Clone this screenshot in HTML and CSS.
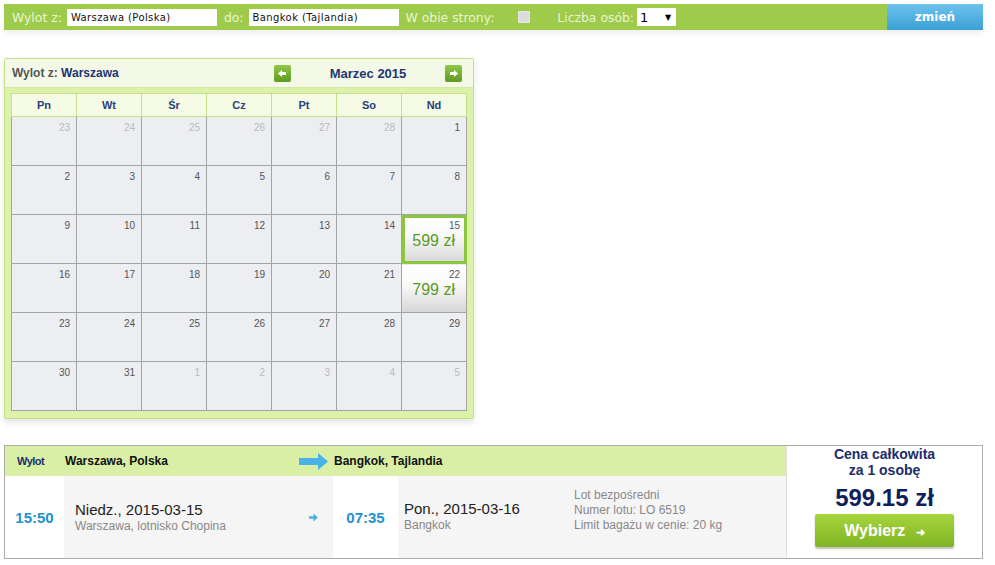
FILE: index.html
```html
<!DOCTYPE html>
<html lang="pl">
<head>
    <meta charset="UTF-8">
    <title>Wyszukiwarka lotów</title>
    <link rel="stylesheet" href="styles.css">
</head>
<body>
<form class="searchbar">
    <label class="sb-label">Wylot z:</label>
    <input type="text" class="sb-input" value="Warszawa (Polska)">
    <label class="sb-label sb-gap">do:</label>
    <input type="text" class="sb-input" value="Bangkok (Tajlandia)">
    <label class="sb-label sb-gap">W obie strony:</label>
    <span class="sb-check"></span>
    <label class="sb-label sb-persons">Liczba osób:</label>
    <span class="sb-select">1 <span class="sb-caret">&#9660;</span></span>
    <button type="button" class="sb-submit">zmień</button>
</form>

<div class="cal">
    <div class="cal-head">
        <div class="cal-from">Wylot z: <b>Warszawa</b></div>
        <span class="cal-nav">
            <svg width="17" height="17" viewBox="0 0 17 17"><path d="M4 8.5 L8 5 V7 H12 V10 H8 V12 Z" fill="#fff"/></svg>
        </span>
        <div class="cal-month">Marzec 2015</div>
        <span class="cal-nav">
            <svg width="17" height="17" viewBox="0 0 17 17"><path d="M13 8.5 L9 5 V7 H5 V10 H9 V12 Z" fill="#fff"/></svg>
        </span>
    </div>
    <table class="cal-grid">
        <thead>
        <tr>
            <th>Pn</th><th>Wt</th><th>Śr</th><th>Cz</th><th>Pt</th><th>So</th><th>Nd</th>
        </tr>
        </thead>
        <tbody>
        <tr>
            <td class="off"><span class="day">23</span></td>
            <td class="off"><span class="day">24</span></td>
            <td class="off"><span class="day">25</span></td>
            <td class="off"><span class="day">26</span></td>
            <td class="off"><span class="day">27</span></td>
            <td class="off"><span class="day">28</span></td>
            <td><span class="day">1</span></td>
        </tr>
        <tr>
            <td><span class="day">2</span></td>
            <td><span class="day">3</span></td>
            <td><span class="day">4</span></td>
            <td><span class="day">5</span></td>
            <td><span class="day">6</span></td>
            <td><span class="day">7</span></td>
            <td><span class="day">8</span></td>
        </tr>
        <tr>
            <td><span class="day">9</span></td>
            <td><span class="day">10</span></td>
            <td><span class="day">11</span></td>
            <td><span class="day">12</span></td>
            <td><span class="day">13</span></td>
            <td><span class="day">14</span></td>
            <td class="priced selected"><span class="day">15</span><span class="price">599 zł</span></td>
        </tr>
        <tr>
            <td><span class="day">16</span></td>
            <td><span class="day">17</span></td>
            <td><span class="day">18</span></td>
            <td><span class="day">19</span></td>
            <td><span class="day">20</span></td>
            <td><span class="day">21</span></td>
            <td class="priced"><span class="day">22</span><span class="price">799 zł</span></td>
        </tr>
        <tr>
            <td><span class="day">23</span></td>
            <td><span class="day">24</span></td>
            <td><span class="day">25</span></td>
            <td><span class="day">26</span></td>
            <td><span class="day">27</span></td>
            <td><span class="day">28</span></td>
            <td><span class="day">29</span></td>
        </tr>
        <tr>
            <td><span class="day">30</span></td>
            <td><span class="day">31</span></td>
            <td class="off"><span class="day">1</span></td>
            <td class="off"><span class="day">2</span></td>
            <td class="off"><span class="day">3</span></td>
            <td class="off"><span class="day">4</span></td>
            <td class="off"><span class="day">5</span></td>
        </tr>
        </tbody>
    </table>
</div>

<div class="flight">
    <div class="flight-main">
        <div class="flight-head">
            <span class="fh-label">Wylot</span>
            <span class="fh-city fh-from">Warszawa, Polska</span>
            <svg class="fh-arrow" width="29" height="17" viewBox="0 0 29 17"><path d="M0 5 H19 V0 L29 8.5 L19 17 V12 H0 Z" fill="#4bb2e8"/></svg>
            <span class="fh-city">Bangkok, Tajlandia</span>
        </div>
        <div class="flight-row">
            <div class="f-time">15:50</div>
            <div class="f-info f-dep">
                <div class="f-date">Niedz., 2015-03-15</div>
                <div class="f-place">Warszawa, lotnisko Chopina</div>
                <svg class="f-go" width="9" height="9" viewBox="0 0 9 9"><path d="M0 3.3 H4.5 V0.5 L8.8 4.5 L4.5 8.5 V5.7 H0 Z" fill="#47b0e2"/></svg>
            </div>
            <div class="f-time f-time2">07:35</div>
            <div class="f-info f-arr">
                <div class="f-dest">
                    <div class="f-date">Pon., 2015-03-16</div>
                    <div class="f-place">Bangkok</div>
                </div>
                <div class="f-details">
                    <div>Lot bezpośredni</div>
                    <div>Numer lotu: LO 6519</div>
                    <div>Limit bagażu w cenie: 20 kg</div>
                </div>
            </div>
        </div>
    </div>
    <div class="flight-price">
        <div class="fp-title">Cena całkowita<br>za 1 osobę</div>
        <div class="fp-sum">599.15 zł</div>
        <button type="button" class="fp-btn">Wybierz <span class="fp-btn-arrow">&#10140;</span></button>
    </div>
</div>
</body>
</html>
```

FILE: styles.css
```css
body {
    margin: 0;
    padding: 4px;
    background: #fff;
    font-family: "Liberation Sans", Arial, sans-serif;
}

/* top search bar */
.searchbar {
    display: flex;
    align-items: center;
    width: 979px;
    height: 26px;
    margin: 0;
    background: #9ecb4b;
    box-shadow: 0 4px 5px rgba(0, 0, 0, 0.06);
    font-family: "DejaVu Sans", Verdana, sans-serif;
}
.sb-label {
    color: #e9f5d4;
    font-size: 12.4px;
    margin-left: 8px;
    margin-right: 5px;
}
.sb-gap {
    margin-left: 7px;
}
.sb-persons {
    margin-left: 27px;
    margin-right: 3px;
}
.sb-input {
    width: 150px;
    height: 17px;
    padding: 0 4px;
    border: none;
    box-sizing: border-box;
    font-family: "DejaVu Sans", Verdana, sans-serif;
    font-size: 10px;
    letter-spacing: 0.4px;
    color: #111;
    background: #fff;
}
.sb-check {
    width: 10px;
    height: 10px;
    margin-left: 19px;
    background: #dcdcdc;
    border: 1px solid #e8e8e8;
    border-radius: 1px;
}
.sb-select {
    display: flex;
    justify-content: space-between;
    align-items: center;
    width: 39px;
    height: 18px;
    padding: 0 5px 0 3px;
    box-sizing: border-box;
    background: #fff;
    font-size: 13px;
    color: #000;
}
.sb-caret {
    font-size: 8px;
}
.sb-submit {
    margin-left: auto;
    width: 96px;
    height: 26px;
    border: none;
    background: linear-gradient(#6cc3ec, #3b9fd6);
    color: #fff;
    font-family: "DejaVu Sans", Verdana, sans-serif;
    font-weight: bold;
    font-size: 12px;
    padding: 0 0 1px 0;
}

/* calendar */
.cal {
    margin-top: 28px;
    padding: 0 6px 7px 6px;
    width: 456px;
    background: #dcf1a9;
    border: 1px solid #c2e184;
    border-radius: 2px;
    box-shadow: 0 4px 6px rgba(0, 0, 0, 0.1);
}
.cal-head {
    display: flex;
    align-items: center;
    height: 28px;
    margin: 0 -6px 5px -6px;
    padding-left: 7px;
    background: #f3f9e6;
    border-bottom: 1px solid #d2eba0;
}
.cal-from {
    width: 262px;
    font-size: 12px;
    font-weight: bold;
    color: #555;
}
.cal-from b {
    color: #1d3373;
}
.cal-nav {
    display: block;
    width: 17px;
    height: 17px;
    border-radius: 2px;
    background: linear-gradient(#8fc747, #5f9a22);
}
.cal-nav svg {
    display: block;
}
.cal-month {
    width: 154px;
    text-align: center;
    font-size: 13px;
    font-weight: bold;
    color: #1f3573;
}
.cal-grid {
    width: 456px;
    border-collapse: collapse;
    table-layout: fixed;
}
.cal-grid th {
    height: 22px;
    padding: 0;
    background: #f6fbe6;
    border: 1px solid #c5e18c;
    font-size: 11px;
    color: #2a3f7d;
}
.cal-grid td {
    height: 48px;
    padding: 0;
    border: 1px solid #a2a4a6;
    background: #eceef1;
    vertical-align: top;
    text-align: right;
}
.day {
    display: block;
    padding: 5px 6px 0 0;
    font-size: 10px;
    color: #555;
}
.off .day {
    color: #bbb;
}
.priced {
    background: linear-gradient(#fff, #fafafa 40%, #d6d6d6) !important;
}
.selected {
    outline: 3px solid #8cc53e;
    outline-offset: -3px;
}
.price {
    display: block;
    padding: 1px 11px 0 0;
    font-size: 16px;
    color: #5a9a2a;
}

/* flight summary */
.flight {
    display: flex;
    width: 979px;
    height: 114px;
    margin-top: 26px;
    box-sizing: border-box;
    border: 1px solid #acacac;
}
.flight-main {
    width: 781px;
}
.flight-head {
    display: flex;
    align-items: center;
    height: 30px;
    background: #d8efa5;
}
.fh-label {
    width: 48px;
    padding-left: 12px;
    font-size: 11px;
    font-weight: bold;
    color: #1a2e6b;
    letter-spacing: -0.5px;
}
.fh-city {
    font-size: 12px;
    font-weight: bold;
    color: #111;
}
.fh-from {
    width: 234px;
}
.fh-arrow {
    margin-right: 6px;
}
.flight-row {
    display: flex;
    height: 82px;
}
.f-time {
    display: flex;
    align-items: center;
    justify-content: center;
    width: 59px;
    font-size: 15px;
    font-weight: bold;
    color: #1f91d0;
    background: #fff;
}
.f-time2 {
    width: 65px;
}
.f-info {
    position: relative;
    display: flex;
    flex-direction: column;
    justify-content: center;
    background: #f5f5f5;
}
.f-dep {
    width: 269px;
    padding-left: 11px;
    box-sizing: border-box;
}
.f-go {
    position: absolute;
    left: 245px;
    top: 37px;
}
.f-arr {
    flex: 1;
    flex-direction: row;
    justify-content: flex-start;
    align-items: center;
    padding-left: 6px;
}
.f-dest {
    width: 170px;
    padding-bottom: 2px;
}
.f-date {
    font-size: 15px;
    color: #222;
}
.f-place {
    font-size: 12px;
    color: #888;
    margin-top: 1px;
}
.f-details {
    font-size: 12px;
    line-height: 15px;
    color: #888;
    margin-bottom: 14px;
}
.flight-price {
    flex: 1;
    display: flex;
    flex-direction: column;
    align-items: center;
    border-left: 1px solid #e0e0e0;
    background: #fff;
}
.fp-title {
    margin-top: 0;
    text-align: center;
    font-size: 14px;
    line-height: 16px;
    font-weight: bold;
    color: #1c2d6c;
}
.fp-sum {
    margin-top: 6px;
    font-size: 24px;
    font-weight: bold;
    color: #0f1f5e;
}
.fp-btn {
    width: 139px;
    height: 33px;
    margin-top: 2px;
    border: none;
    border-radius: 2px;
    background: linear-gradient(#a6d43c, #80b524);
    box-shadow: 0 2px 2px rgba(0, 0, 0, 0.25);
    color: #fff;
    font-family: "Liberation Sans", Arial, sans-serif;
    font-size: 16px;
    font-weight: bold;
}
.fp-btn-arrow {
    font-size: 11px;
    margin-left: 6px;
}
```
